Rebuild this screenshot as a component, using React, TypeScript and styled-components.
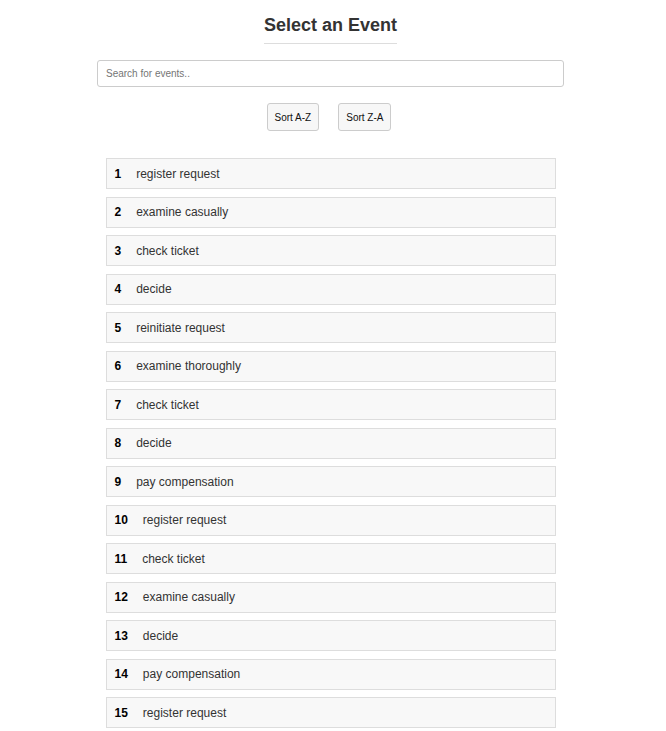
import React from "react";
import styled, { createGlobalStyle } from "styled-components";

const Global = createGlobalStyle`
  html, body { margin: 0; padding: 0; background: #fff; overflow: hidden; }
  body { font-family: "Liberation Sans", Arial, sans-serif; }
`;

const Page = styled.div`
  display: flex;
  flex-direction: column;
  align-items: center;
  padding: 15px 5px 0 0;
`;

const Title = styled.h2`
  margin: 0;
  font-size: 18px;
  line-height: 21px;
  font-weight: bold;
  color: #333;
  padding-bottom: 7px;
  border-bottom: 1px solid #ddd;
`;

const Search = styled.input`
  box-sizing: border-box;
  margin-top: 16px;
  width: 467px;
  height: 27px;
  border: 1px solid #ccc;
  border-radius: 3px;
  padding: 0 8px;
  font-family: "Liberation Sans", Arial, sans-serif;
  font-size: 10px;
  color: #333;
  outline: none;
  &::placeholder { color: #757575; }
`;

const ButtonRow = styled.div`
  display: flex;
  gap: 19px;
  margin-top: 16px;
  margin-right: 3px;
`;

const SortButton = styled.button`
  box-sizing: border-box;
  height: 28px;
  padding: 0 7px;
  background: #f7f7f7;
  border: 1px solid #ccc;
  border-radius: 3px;
  font-family: "Liberation Sans", Arial, sans-serif;
  font-size: 10px;
  color: #111;
`;

const List = styled.ul`
  list-style: none;
  margin: 27px 0 0;
  padding: 0;
  width: 450px;
  display: flex;
  flex-direction: column;
  gap: 7.5px;
`;

const Item = styled.li`
  box-sizing: border-box;
  height: 31px;
  display: flex;
  align-items: center;
  padding: 0 8px;
  background: #f8f8f8;
  border: 1px solid #ddd;
  font-size: 12px;
  color: #333;
`;

const Num = styled.span`
  font-weight: bold;
  color: #000;
  margin-right: 15px;
`;

const events = [
  "register request",
  "examine casually",
  "check ticket",
  "decide",
  "reinitiate request",
  "examine thoroughly",
  "check ticket",
  "decide",
  "pay compensation",
  "register request",
  "check ticket",
  "examine casually",
  "decide",
  "pay compensation",
  "register request",
];

export default function App() {
  return (
    <>
      <Global />
      <Page>
        <Title>Select an Event</Title>
        <Search placeholder="Search for events.." />
        <ButtonRow>
          <SortButton>Sort A-Z</SortButton>
          <SortButton>Sort Z-A</SortButton>
        </ButtonRow>
        <List>
          {events.map((e, i) => (
            <Item key={i}>
              <Num>{i + 1}</Num>
              {e}
            </Item>
          ))}
        </List>
      </Page>
    </>
  );
}
